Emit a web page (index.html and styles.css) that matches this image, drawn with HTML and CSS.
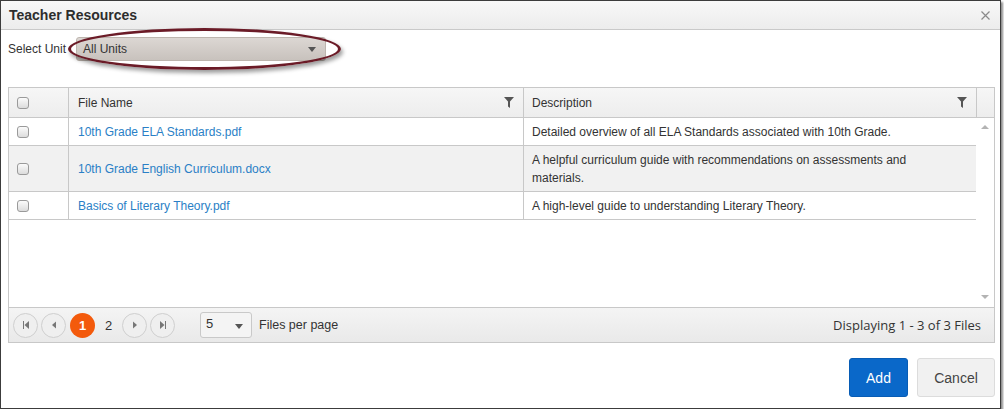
FILE: index.html
```html
<!DOCTYPE html>
<html lang="en">
  <head>
    <meta charset="UTF-8" />
    <title>Teacher Resources</title>
    <link rel="stylesheet" href="styles.css">
  </head>
  <body>
    <div class="dialog">
      <!-- title -->
      <div class="titlebar">
        <span class="title">Teacher Resources</span>
        <svg class="close" width="9" height="9" viewBox="0 0 9 9">
          <path d="M0.5 0.5L8.5 8.5M8.5 0.5L0.5 8.5" stroke="#8a8a8a" stroke-width="1.2" />
        </svg>
      </div>

      <div class="content">
        <!-- unit picker -->
        <div class="unit-row">
          <label class="unit-label">Select Unit</label>
          <div class="unit-select">
            <span>All Units</span>
            <span class="caret"></span>
          </div>
          <div class="highlight"></div>
        </div>

        <!-- grid -->
        <div class="grid">
          <div class="grid-head">
            <div class="c-check"><span class="box"></span></div>
            <div class="c-name">
              File Name
              <svg class="funnel" width="10" height="11" viewBox="0 0 10 11"><path d="M0 0H10L6 4.5V11L4 9.5V4.5Z" fill="#555" /></svg>
            </div>
            <div class="c-desc">
              Description
              <svg class="funnel" width="10" height="11" viewBox="0 0 10 11"><path d="M0 0H10L6 4.5V11L4 9.5V4.5Z" fill="#555" /></svg>
            </div>
            <div class="c-scroll"></div>
          </div>

          <div class="grid-body">
            <div class="rows">
              <div class="row">
                <div class="c-check"><span class="box"></span></div>
                <div class="c-name"><a href="#">10th Grade ELA Standards.pdf</a></div>
                <div class="c-desc">Detailed overview of all ELA Standards associated with 10th Grade.</div>
              </div>
              <div class="row alt">
                <div class="c-check"><span class="box"></span></div>
                <div class="c-name"><a href="#">10th Grade English Curriculum.docx</a></div>
                <div class="c-desc">A helpful curriculum guide with recommendations on assessments and materials.</div>
              </div>
              <div class="row">
                <div class="c-check"><span class="box"></span></div>
                <div class="c-name"><a href="#">Basics of Literary Theory.pdf</a></div>
                <div class="c-desc">A high-level guide to understanding Literary Theory.</div>
              </div>
            </div>
            <div class="scrollbar">
              <span class="arrow-up"></span>
              <span class="arrow-down"></span>
            </div>
          </div>

          <!-- pager -->
          <div class="pager">
            <div class="pages">
              <span class="pg-btn">
                <svg width="8" height="8" viewBox="0 0 8 8"><path d="M1 0H2V8H1Z M7 0V8L2.5 4Z" fill="#777" /></svg>
              </span>
              <span class="pg-btn">
                <svg width="8" height="8" viewBox="0 0 8 8"><path d="M6 0.5V7.5L2 4Z" fill="#777" /></svg>
              </span>
              <span class="pg-num current">1</span>
              <span class="pg-num">2</span>
              <span class="pg-btn">
                <svg width="8" height="8" viewBox="0 0 8 8"><path d="M2 0.5V7.5L6 4Z" fill="#777" /></svg>
              </span>
              <span class="pg-btn">
                <svg width="8" height="8" viewBox="0 0 8 8"><path d="M1 0V8L5.5 4Z M6 0H7V8H6Z" fill="#777" /></svg>
              </span>
              <div class="size-select">
                <span>5</span>
                <span class="caret"></span>
              </div>
              <span class="per-page">Files per page</span>
            </div>
            <div class="info">Displaying 1 - 3 of 3 Files</div>
          </div>
        </div>

        <!-- buttons -->
        <div class="footer">
          <button class="btn btn-add">Add</button>
          <button class="btn btn-cancel">Cancel</button>
        </div>
      </div>
    </div>
  </body>
</html>
```

FILE: styles.css
```css
* {
  margin: 0;
  padding: 0;
  box-sizing: border-box;
}
body {
  background-color: #fff;
  font-family: "Liberation Sans", Arial, sans-serif;
  font-size: 12px;
  color: #333;
}
.dialog {
  width: 1001px;
  height: 409px;
  border: 1px solid #3c3c3c;
  box-shadow: 2px 2px 2px rgba(0, 0, 0, 0.45);
  background-color: #fff;
}

/* title */
.titlebar {
  display: flex;
  justify-content: space-between;
  align-items: center;
  height: 29px;
  padding: 0 10px 0 8px;
  background: linear-gradient(#f8f8f8, #ececec);
  border-bottom: 1px solid #c9c9c9;
}
.title {
  font-size: 14px;
  font-weight: bold;
  color: #2d2d2d;
}
.close {
  margin-top: 1px;
}

.content {
  padding: 0 5px 0 7px;
}

/* unit picker */
.unit-row {
  position: relative;
  display: flex;
  align-items: center;
  height: 57px;
  padding-top: 7px;
  padding-bottom: 26px;
}
.unit-label {
  width: 68px;
  color: #333;
}
.unit-select {
  display: flex;
  justify-content: space-between;
  align-items: center;
  width: 250px;
  height: 24px;
  padding: 0 9px 0 6px;
  background: linear-gradient(#dcd7d3, #c8c2bd);
  border: 1px solid #bdb5ae;
  border-radius: 3px;
  color: #333;
}
.caret {
  width: 0;
  height: 0;
  border-left: 4px solid transparent;
  border-right: 4px solid transparent;
  border-top: 5px solid #555;
}
.highlight {
  position: absolute;
  left: 60px;
  top: -2px;
  width: 273px;
  height: 42px;
  border: 3px solid #6b1b27;
  border-radius: 50%;
  box-shadow: 2px 3px 4px rgba(0, 0, 0, 0.4);
}

/* grid */
.grid {
  border: 1px solid #c8c8c8;
}
.grid-head {
  display: flex;
  height: 30px;
  background: linear-gradient(#f6f6f6, #ededed);
  border-bottom: 1px solid #c8c8c8;
}
.grid-head > div {
  display: flex;
  align-items: center;
  justify-content: space-between;
}
.c-check {
  display: flex;
  align-items: center;
  padding-left: 8px;
  width: 59px;
  flex-shrink: 0;
}
.c-name {
  width: 455px;
  flex-shrink: 0;
  padding: 0 9px 0 9px;
  border-left: 1px solid #c8c8c8;
}
.c-desc {
  width: 453px;
  flex-shrink: 0;
  padding: 0 9px 0 8px;
  border-left: 1px solid #c8c8c8;
}
.c-scroll {
  flex: 1;
  border-left: 1px solid #c8c8c8;
}
.box {
  display: inline-block;
  width: 12px;
  height: 12px;
  border: 1px solid #9a9a9a;
  border-radius: 3px;
  background: linear-gradient(#fbfbfb, #dcdcdc);
}

.grid-body {
  display: flex;
  height: 190px;
  border-bottom: 1px solid #c8c8c8;
}
.rows {
  width: 967px;
}
.row {
  display: flex;
  border-bottom: 1px solid #c8c8c8;
  line-height: 18px;
}
.row > div {
  display: flex;
  align-items: center;
  padding-top: 5px;
  padding-bottom: 4px;
}
.row.alt {
  background-color: #f1f1f1;
}
.row .c-desc {
  padding-right: 40px;
}
.row a {
  color: #2a7fc6;
  text-decoration: none;
}
.scrollbar {
  flex: 1;
  display: flex;
  flex-direction: column;
  justify-content: space-between;
  align-items: center;
  padding: 7px 0 8px;
}
.arrow-up,
.arrow-down {
  width: 0;
  height: 0;
  border-left: 4px solid transparent;
  border-right: 4px solid transparent;
}
.arrow-up {
  border-bottom: 4px solid #b3b3b3;
}
.arrow-down {
  border-top: 4px solid #b3b3b3;
}

/* pager */
.pager {
  display: flex;
  justify-content: space-between;
  align-items: center;
  height: 34px;
  padding: 0 13px 0 4px;
  background: linear-gradient(#f4f4f4, #e9e9e9);
}
.pages {
  display: flex;
  align-items: center;
}
.pg-btn {
  display: flex;
  align-items: center;
  justify-content: center;
  width: 25px;
  height: 25px;
  margin-right: 3px;
  border: 1px solid #cfcfcf;
  border-radius: 50%;
  background-color: #efefef;
}
.pg-num {
  display: flex;
  align-items: center;
  justify-content: center;
  width: 21px;
  height: 25px;
  margin-right: 3px;
  font-size: 13px;
  color: #333;
}
.pg-num.current {
  width: 25px;
  background-color: #f35a0c;
  border-radius: 50%;
  color: #fff;
  font-weight: bold;
  margin-left: 1px;
}
.size-select {
  display: flex;
  justify-content: space-between;
  align-items: center;
  width: 52px;
  height: 26px;
  margin-left: 22px;
  padding: 0 8px 4px 5px;
  border: 1px solid #c9c9c9;
  border-radius: 3px;
  background-color: #f4f4f4;
  font-size: 13px;
}
.size-select .caret {
  margin-top: 6px;
}
.per-page {
  margin-left: 7px;
  font-size: 12.5px;
}
.info {
  font-family: "Open Sans", "DejaVu Sans", sans-serif;
  font-size: 13px;
  color: #333;
}

/* buttons */
.footer {
  display: flex;
  justify-content: flex-end;
  gap: 9px;
  padding-top: 15px;
}
.btn {
  height: 39px;
  border-radius: 3px;
  font-family: "Liberation Sans", Arial, sans-serif;
  font-size: 14px;
}
.btn-add {
  width: 59px;
  background-color: #0a68c9;
  border: 1px solid #075cb5;
  color: #fff;
}
.btn-cancel {
  width: 78px;
  background-color: #f1f1f1;
  border: 1px solid #dcdcdc;
  color: #444;
}
```
